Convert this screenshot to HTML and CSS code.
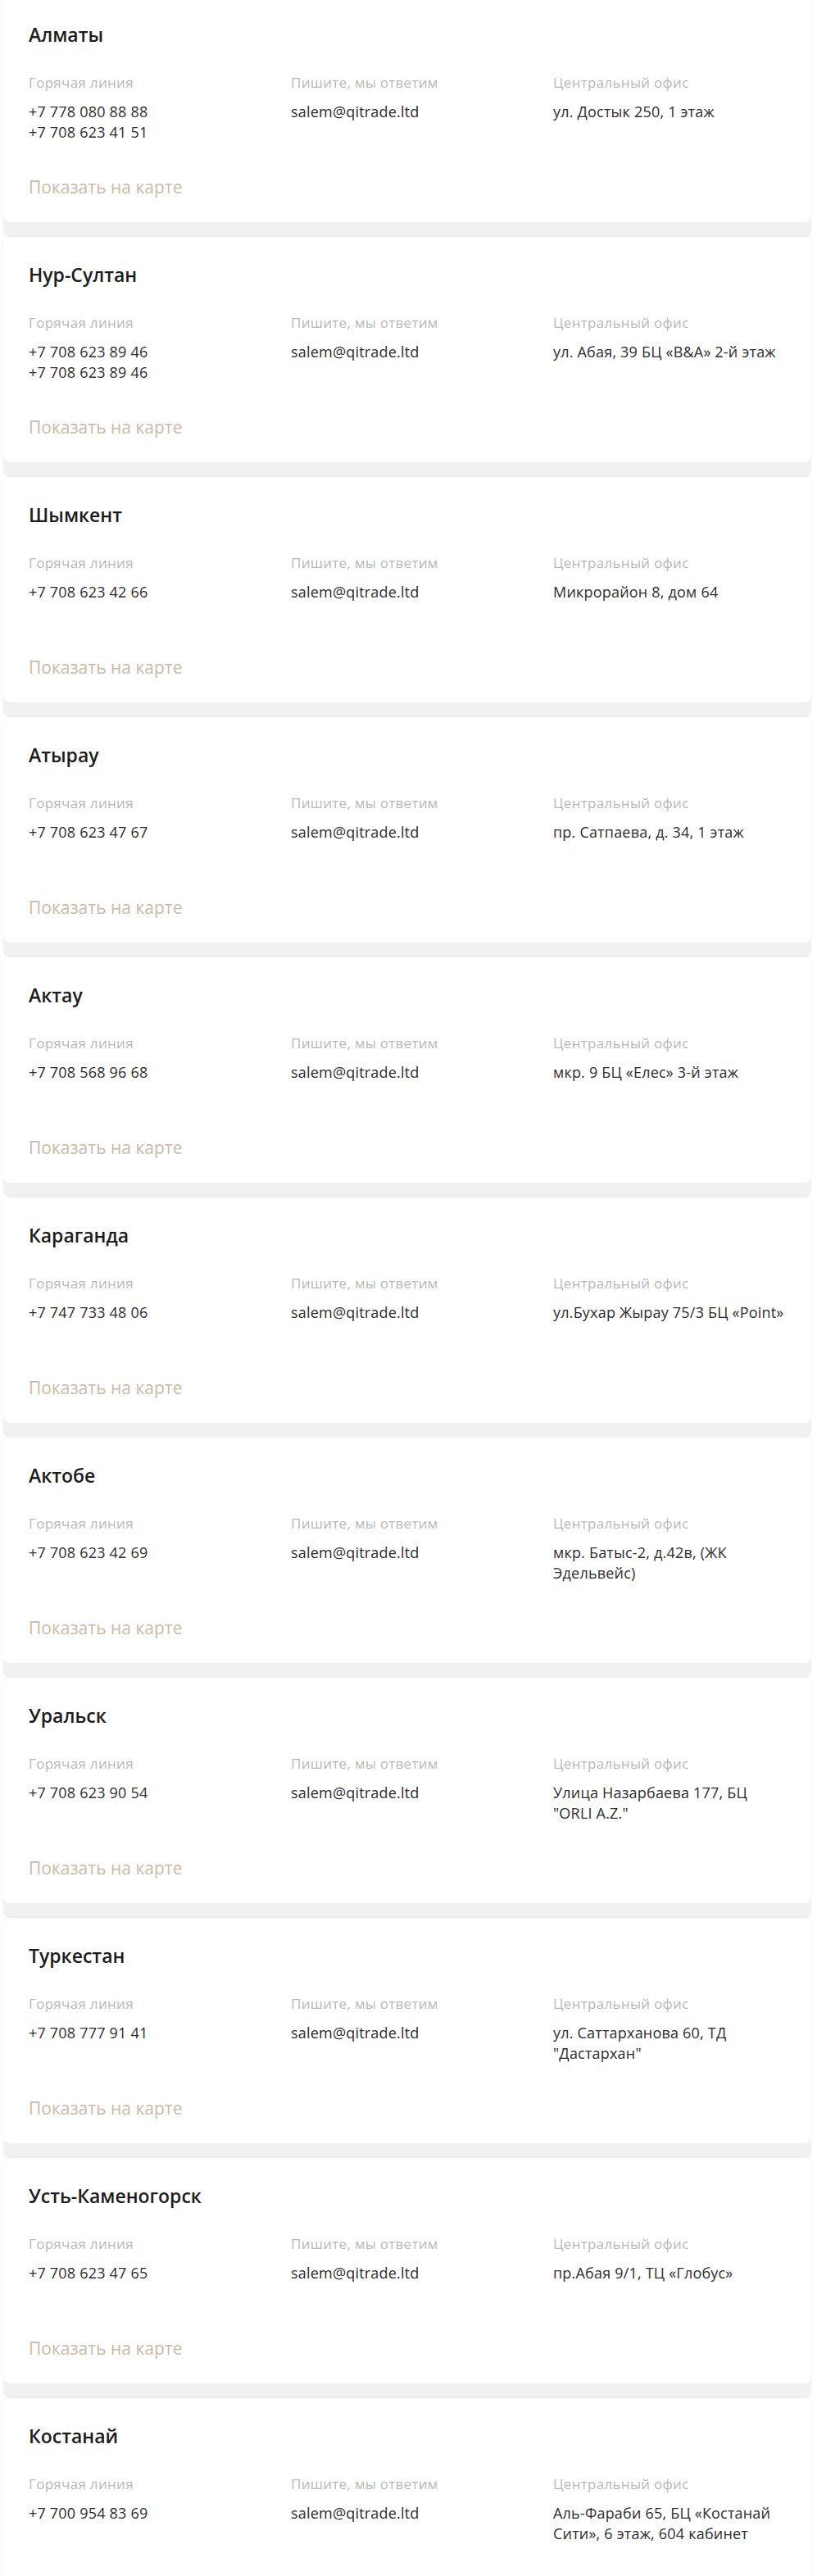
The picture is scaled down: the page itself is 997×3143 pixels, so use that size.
FILE: index.html
```html
<!DOCTYPE html>
<html lang="ru">
<head>
<meta charset="utf-8">
<title>Контакты</title>
<link rel="stylesheet" href="styles.css">
</head>
<body>
<div class="list">
  <article class="card">
    <h2 class="city">Алматы</h2>
    <div class="info">
      <div class="col"><div class="label">Горячая линия</div><div class="val">+7 778 080 88 88<br>+7 708 623 41 51</div></div>
      <div class="col"><div class="label">Пишите, мы ответим</div><div class="val">salem@qitrade.ltd</div></div>
      <div class="col"><div class="label">Центральный офис</div><div class="val">ул. Достык 250, 1 этаж</div></div>
    </div>
    <a class="map" href="#">Показать на карте</a>
  </article>
  <article class="card">
    <h2 class="city">Нур-Султан</h2>
    <div class="info">
      <div class="col"><div class="label">Горячая линия</div><div class="val">+7 708 623 89 46<br>+7 708 623 89 46</div></div>
      <div class="col"><div class="label">Пишите, мы ответим</div><div class="val">salem@qitrade.ltd</div></div>
      <div class="col"><div class="label">Центральный офис</div><div class="val">ул. Абая, 39 БЦ «B&amp;A» 2-й этаж</div></div>
    </div>
    <a class="map" href="#">Показать на карте</a>
  </article>
  <article class="card">
    <h2 class="city">Шымкент</h2>
    <div class="info">
      <div class="col"><div class="label">Горячая линия</div><div class="val">+7 708 623 42 66</div></div>
      <div class="col"><div class="label">Пишите, мы ответим</div><div class="val">salem@qitrade.ltd</div></div>
      <div class="col"><div class="label">Центральный офис</div><div class="val">Микрорайон 8, дом 64</div></div>
    </div>
    <a class="map" href="#">Показать на карте</a>
  </article>
  <article class="card">
    <h2 class="city">Атырау</h2>
    <div class="info">
      <div class="col"><div class="label">Горячая линия</div><div class="val">+7 708 623 47 67</div></div>
      <div class="col"><div class="label">Пишите, мы ответим</div><div class="val">salem@qitrade.ltd</div></div>
      <div class="col"><div class="label">Центральный офис</div><div class="val">пр. Сатпаева, д. 34, 1 этаж</div></div>
    </div>
    <a class="map" href="#">Показать на карте</a>
  </article>
  <article class="card">
    <h2 class="city">Актау</h2>
    <div class="info">
      <div class="col"><div class="label">Горячая линия</div><div class="val">+7 708 568 96 68</div></div>
      <div class="col"><div class="label">Пишите, мы ответим</div><div class="val">salem@qitrade.ltd</div></div>
      <div class="col"><div class="label">Центральный офис</div><div class="val">мкр. 9 БЦ «Елес» 3-й этаж</div></div>
    </div>
    <a class="map" href="#">Показать на карте</a>
  </article>
  <article class="card">
    <h2 class="city">Караганда</h2>
    <div class="info">
      <div class="col"><div class="label">Горячая линия</div><div class="val">+7 747 733 48 06</div></div>
      <div class="col"><div class="label">Пишите, мы ответим</div><div class="val">salem@qitrade.ltd</div></div>
      <div class="col"><div class="label">Центральный офис</div><div class="val">ул.Бухар Жырау 75/3 БЦ «Point»</div></div>
    </div>
    <a class="map" href="#">Показать на карте</a>
  </article>
  <article class="card">
    <h2 class="city">Актобе</h2>
    <div class="info">
      <div class="col"><div class="label">Горячая линия</div><div class="val">+7 708 623 42 69</div></div>
      <div class="col"><div class="label">Пишите, мы ответим</div><div class="val">salem@qitrade.ltd</div></div>
      <div class="col"><div class="label">Центральный офис</div><div class="val">мкр. Батыс-2, д.42в, (ЖК<br>Эдельвейс)</div></div>
    </div>
    <a class="map" href="#">Показать на карте</a>
  </article>
  <article class="card">
    <h2 class="city">Уральск</h2>
    <div class="info">
      <div class="col"><div class="label">Горячая линия</div><div class="val">+7 708 623 90 54</div></div>
      <div class="col"><div class="label">Пишите, мы ответим</div><div class="val">salem@qitrade.ltd</div></div>
      <div class="col"><div class="label">Центральный офис</div><div class="val">Улица Назарбаева 177, БЦ<br>"ORLI A.Z."</div></div>
    </div>
    <a class="map" href="#">Показать на карте</a>
  </article>
  <article class="card">
    <h2 class="city">Туркестан</h2>
    <div class="info">
      <div class="col"><div class="label">Горячая линия</div><div class="val">+7 708 777 91 41</div></div>
      <div class="col"><div class="label">Пишите, мы ответим</div><div class="val">salem@qitrade.ltd</div></div>
      <div class="col"><div class="label">Центральный офис</div><div class="val">ул. Саттарханова 60, ТД<br>"Дастархан"</div></div>
    </div>
    <a class="map" href="#">Показать на карте</a>
  </article>
  <article class="card">
    <h2 class="city">Усть-Каменогорск</h2>
    <div class="info">
      <div class="col"><div class="label">Горячая линия</div><div class="val">+7 708 623 47 65</div></div>
      <div class="col"><div class="label">Пишите, мы ответим</div><div class="val">salem@qitrade.ltd</div></div>
      <div class="col"><div class="label">Центральный офис</div><div class="val">пр.Абая 9/1, ТЦ «Глобус»</div></div>
    </div>
    <a class="map" href="#">Показать на карте</a>
  </article>
  <article class="card">
    <h2 class="city">Костанай</h2>
    <div class="info">
      <div class="col"><div class="label">Горячая линия</div><div class="val">+7 700 954 83 69</div></div>
      <div class="col"><div class="label">Пишите, мы ответим</div><div class="val">salem@qitrade.ltd</div></div>
      <div class="col"><div class="label">Центральный офис</div><div class="val">Аль-Фараби 65, БЦ «Костанай<br>Сити», 6 этаж, 604 кабинет</div></div>
    </div>
    <a class="map" href="#">Показать на карте</a>
  </article>
</div>
</body>
</html>
```
FILE: styles.css
```css
html, body {
  margin: 0;
  padding: 0;
  background: #ffffff;
}

body {
  font-family: "Open Sans", "Liberation Sans", sans-serif;
  color: #2b2b2b;
}

.list {
  display: flex;
  flex-direction: column;
  gap: 18px;
  margin-top: -4px;
  padding: 0 7px 0 4px;
}

.card {
  background: #ffffff;
  border-radius: 8px;
  padding: 31px 35px 29px 31px;
  height: 275px;
  box-sizing: border-box;
  box-shadow: 0 18px 0 #f1f1f1, 0 0 4px rgba(0, 0, 0, 0.05);
  display: flex;
  flex-direction: column;
}

.city {
  margin: 0;
  font-size: 23px;
  line-height: 30px;
  font-weight: 600;
  color: #1c1c1c;
}

.info {
  display: grid;
  grid-template-columns: 280px 280px 1fr;
  column-gap: 40px;
  margin-top: 34px;
}

.label {
  font-size: 17px;
  line-height: 20px;
  color: #b9b9b9;
  letter-spacing: 0.3px;
}

.val {
  margin-top: 13px;
  min-height: 50px;
  font-size: 18px;
  line-height: 25px;
  color: #2e2e2e;
  letter-spacing: 0.2px;
  white-space: nowrap;
}

.map {
  margin-top: 41px;
  font-size: 21px;
  line-height: 26px;
  color: #c9bba6;
  text-decoration: none;
  align-self: flex-start;
}
```
